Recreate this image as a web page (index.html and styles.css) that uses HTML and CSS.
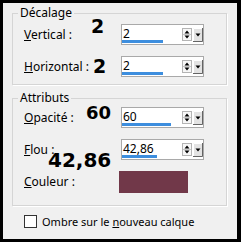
FILE: index.html
```html
<!DOCTYPE html>
<html lang="fr">
<head>
  <meta charset="UTF-8" />
  <title>Ombre portée</title>
  <link rel="stylesheet" href="styles.css">
</head>
<body>
  <div class="dialog">
    <fieldset class="group">
      <legend>Décalage</legend>
      <div class="row">
        <label><u>V</u>ertical :</label>
        <div class="spin">
          <span class="val">2</span>
          <svg width="21" height="14" viewBox="0 0 21 14">
            <rect x="0.5" y="0.5" width="9" height="12" fill="#f7f7f7" stroke="#b4b4b4"/>
            <path d="M2.5 5.5h5l-2.5-3z"/>
            <path d="M1 6.5h8" stroke="#c8c8c8"/>
            <path d="M2.5 7.5h5l-2.5 3z"/>
            <rect x="11" y="0" width="10" height="14" fill="#e3e3e3"/>
            <path d="M11.5 13v-12.5h8.5" stroke="#fff" fill="none"/>
            <path d="M11 13.5h9.5v-13.5" stroke="#646464" fill="none"/>
            <path d="M13.5 5.5h5l-2.5 3z"/>
          </svg>
          <span class="bar" style="width:41px"></span>
        </div>
        <span class="note note-v">2</span>
      </div>
      <div class="row">
        <label><u>H</u>orizontal :</label>
        <div class="spin">
          <span class="val">2</span>
          <svg width="21" height="14" viewBox="0 0 21 14">
            <rect x="0.5" y="0.5" width="9" height="12" fill="#f7f7f7" stroke="#b4b4b4"/>
            <path d="M2.5 5.5h5l-2.5-3z"/>
            <path d="M1 6.5h8" stroke="#c8c8c8"/>
            <path d="M2.5 7.5h5l-2.5 3z"/>
            <rect x="11" y="0" width="10" height="14" fill="#e3e3e3"/>
            <path d="M11.5 13v-12.5h8.5" stroke="#fff" fill="none"/>
            <path d="M11 13.5h9.5v-13.5" stroke="#646464" fill="none"/>
            <path d="M13.5 5.5h5l-2.5 3z"/>
          </svg>
          <span class="bar" style="width:41px"></span>
        </div>
        <span class="note note-h">2</span>
      </div>
    </fieldset>

    <fieldset class="group">
      <legend>Attributs</legend>
      <div class="row">
        <label><u>O</u>pacité :</label>
        <div class="spin">
          <span class="val">60</span>
          <svg width="21" height="14" viewBox="0 0 21 14">
            <rect x="0.5" y="0.5" width="9" height="12" fill="#f7f7f7" stroke="#b4b4b4"/>
            <path d="M2.5 5.5h5l-2.5-3z"/>
            <path d="M1 6.5h8" stroke="#c8c8c8"/>
            <path d="M2.5 7.5h5l-2.5 3z"/>
            <rect x="11" y="0" width="10" height="14" fill="#e3e3e3"/>
            <path d="M11.5 13v-12.5h8.5" stroke="#fff" fill="none"/>
            <path d="M11 13.5h9.5v-13.5" stroke="#646464" fill="none"/>
            <path d="M13.5 5.5h5l-2.5 3z"/>
          </svg>
          <span class="bar" style="width:49px"></span>
        </div>
        <span class="note note-o">60</span>
      </div>
      <div class="row">
        <label><u>F</u>lou :</label>
        <div class="spin">
          <span class="val">42,86</span>
          <svg width="21" height="14" viewBox="0 0 21 14">
            <rect x="0.5" y="0.5" width="9" height="12" fill="#f7f7f7" stroke="#b4b4b4"/>
            <path d="M2.5 5.5h5l-2.5-3z"/>
            <path d="M1 6.5h8" stroke="#c8c8c8"/>
            <path d="M2.5 7.5h5l-2.5 3z"/>
            <rect x="11" y="0" width="10" height="14" fill="#e3e3e3"/>
            <path d="M11.5 13v-12.5h8.5" stroke="#fff" fill="none"/>
            <path d="M11 13.5h9.5v-13.5" stroke="#646464" fill="none"/>
            <path d="M13.5 5.5h5l-2.5 3z"/>
          </svg>
          <span class="bar" style="width:35px"></span>
        </div>
        <span class="note note-f">42,86</span>
      </div>
      <div class="row row-color">
        <label><u>C</u>ouleur :</label>
        <div class="swatch"></div>
      </div>
    </fieldset>

    <label class="check">
      <span class="box"></span>
      <span>Ombre sur le <u>n</u>ouveau calque</span>
    </label>
  </div>
</body>
</html>
```

FILE: styles.css
```css
body {
  margin: 0;
  background: #000;
  font-family: "Noto Sans", sans-serif;
  font-size: 12px;
  color: #000;
}
.dialog {
  position: relative;
  width: 234px;
  height: 236px;
  margin: 3px 0 0 3px;
  padding: 2px 0 0 9px;
  box-sizing: border-box;
  background: #f0f0f0;
}
.group {
  margin: 0;
  width: 215px;
  box-sizing: border-box;
  border: 1px solid #d5d5d5;
  box-shadow: 1px 1px 0 #fff;
  padding: 3px 0 7px 11px;
}
.group legend {
  padding: 0 2px;
  margin-left: -6px;
  line-height: 16px;
}
.group + .group {
  margin-top: 5px;
  padding: 1px 0 12px 11px;
}
.row {
  position: relative;
  display: grid;
  grid-template-columns: 97px 83px;
  align-items: center;
  height: 21px;
}
.row + .row {
  margin-top: 11px;
}
.row-color {
  margin-top: 14px;
  height: 22px;
}
.row label {
  line-height: 14px;
}
.spin {
  position: relative;
  display: flex;
  height: 21px;
  box-sizing: border-box;
  padding: 2px 0 0 1px;
  border: 1px solid #a9a9a9;
  background: #fff;
}
.spin .val {
  flex: 1;
  line-height: 14px;
}
.spin svg {
  margin-top: 1px;
}
.bar {
  position: absolute;
  left: 0;
  bottom: 1px;
  height: 3px;
  background: #3d8ede;
}
.swatch {
  width: 69px;
  height: 22px;
  margin-left: -2px;
  background: #713849;
}
.note {
  position: absolute;
  font: bold 19px/1 "DejaVu Sans", sans-serif;
}
.note-v {
  left: 67px;
  top: -7px;
}
.note-h {
  left: 69px;
  top: 1px;
}
.note-o {
  left: 62px;
  top: -3px;
  font-size: 18px;
}
.note-f {
  left: 24px;
  top: 11px;
  font-size: 20px;
}
.check {
  display: flex;
  align-items: center;
  gap: 5px;
  margin: 8px 0 0 12px;
  font-size: 11px;
}
.box {
  width: 13px;
  height: 13px;
  box-sizing: border-box;
  border: 1px solid #333;
  background: #fff;
}
```
